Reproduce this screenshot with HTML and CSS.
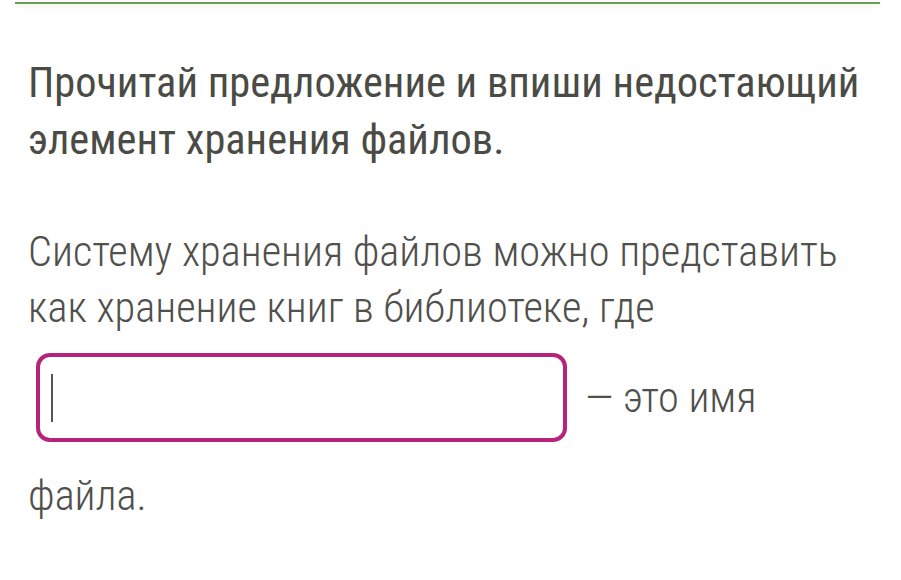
FILE: index.html
```html
<!DOCTYPE html>
<html lang="ru">
<head>
<meta charset="utf-8">
<link rel="stylesheet" href="styles.css">
</head>
<body>
<div class="page">
  <div class="rule"></div>
  <h1 class="task">Прочитай предложение и впиши недостающий элемент хранения файлов.</h1>
  <p class="text">Систему хранения файлов можно представить как хранение книг в библиотеке, где</p>
  <div class="answer-row">
    <div class="input"><span class="caret"></span></div>
    <span class="tail">— это имя</span>
  </div>
  <p class="text last">файла.</p>
</div>
</body>
</html>
```

FILE: styles.css
```css
html, body {
  margin: 0;
  padding: 0;
  background: #ffffff;
}
.page {
  width: 901px;
  height: 580px;
  overflow: hidden;
  font-family: "Roboto", "Liberation Sans", sans-serif;
  font-stretch: 75%;
}
.rule {
  margin: 2px 21px 0 15px;
  height: 2px;
  background: #6e9a5a;
  box-shadow: 0 2px 4px rgba(140, 200, 100, 0.25);
}
.task {
  margin: 50px 20px 0 28px;
  font-size: 42.4px;
  line-height: 57px;
  font-weight: 430;
  color: #4a4b45;
}
.text {
  margin: 56px 20px 0 28px;
  font-size: 42.4px;
  line-height: 56px;
  font-weight: 300;
  color: #50504c;
}
.answer-row {
  display: flex;
  align-items: center;
  margin: 17px 0 0 36px;
}
.input {
  width: 512px;
  height: 81px;
  border: 4px solid #b5247a;
  border-radius: 14px;
  display: flex;
  align-items: center;
  padding-left: 11px;
  box-sizing: content-box;
}
.caret {
  display: block;
  width: 2px;
  height: 48px;
  background: #555;
}
.tail {
  margin-left: 18px;
  font-size: 42.4px;
  font-weight: 300;
  color: #50504c;
}
.text.last {
  margin-top: 26px;
}
```
